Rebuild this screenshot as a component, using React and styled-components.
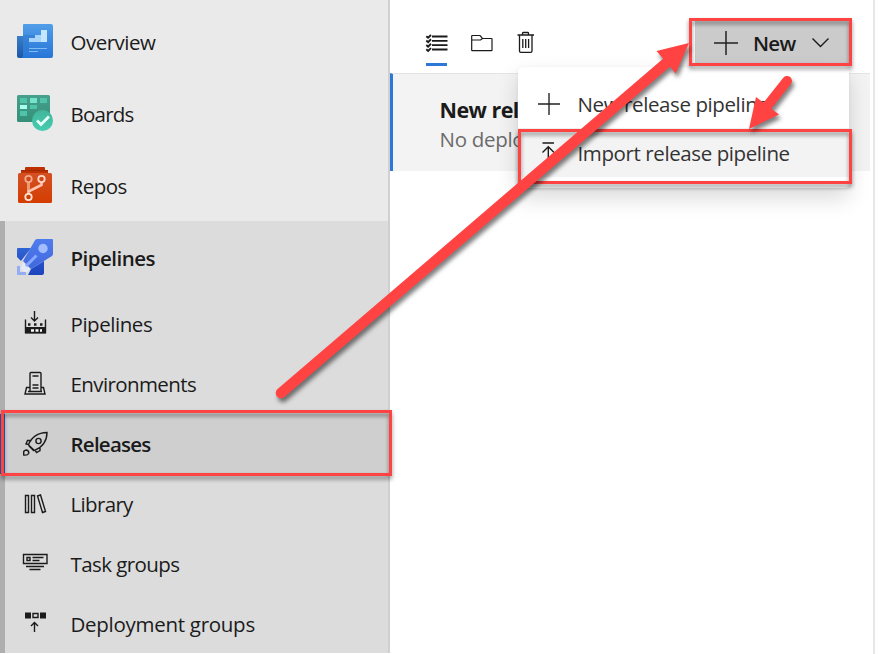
import React from "react";
import styled, { createGlobalStyle, css } from "styled-components";

const Global = createGlobalStyle`
  * { box-sizing: border-box; }
  body { margin: 0; background: #fff; font-family: "Open Sans", "Noto Sans", sans-serif; color: #1b1b1b; }
  svg { display: block; overflow: visible; }
`;

const Page = styled.div`
  position: relative;
  display: flex;
  width: 882px;
  height: 654px;
  overflow: hidden;
`;

const Sidebar = styled.nav`
  width: 390px;
  height: 653px;
  overflow: hidden;
  background: #eaeaea;
  border-right: 2px solid #d0d0d0;
  display: flex;
  flex-direction: column;
`;

const HubList = styled.div`
  flex: none;
  padding-top: 6px;
  height: 221px;
`;

const NavItem = styled.a`
  display: flex;
  align-items: center;
  height: ${(p) => (p.$hub ? 72 : 60)}px;
  padding-left: ${(p) => (p.$inset ? 11 : 16)}px;
  ${(p) =>
    p.$selected &&
    css`
      background: #cfcfcf;
      border-left: 5px solid #1f62bd;
      margin-left: -5px;
      padding-left: 11px;
    `}
`;

const IconBox = styled.span`
  width: 38px;
  height: 38px;
  flex: none;
`;

const Label = styled.span`
  margin-left: 16.5px;
  padding-top: ${(p) => p.$drop || 0}px;
  font-size: 20.5px;
  line-height: 28px;
  white-space: nowrap;
  font-weight: ${(p) => (p.$strong ? 600 : 400)};
  letter-spacing: ${(p) => p.$track || 0}px;
`;

const Section = styled.div`
  flex: 1;
  min-height: 0;
  background: #dcdcdc;
  border-left: 5px solid #afafaf;
`;

const SectionHead = styled.div`
  height: 73px;
`;

const Main = styled.main`
  width: 485px;
  border-right: 2px solid #e6e6e6;
`;

const Toolbar = styled.header`
  display: flex;
  align-items: flex-start;
  height: 73px;
  padding: 19px 24px 0 36px;
`;

const ToolTab = styled.span`
  width: 21px;
  height: 47px;
  margin-right: ${(p) => p.$gap || 0}px;
  padding-top: 11px;
  border-bottom: 3px solid ${(p) => (p.$active ? "#2b78d8" : "transparent")};
`;

const NewButton = styled.div`
  display: flex;
  align-items: center;
  width: 154px;
  height: 47px;
  margin-left: auto;
  padding-left: 19px;
  background: #cbcbcb;
  border-radius: 2px;
  font-size: 20.5px;
  font-weight: 600;
  letter-spacing: -0.7px;
`;

const ButtonText = styled.span`
  width: 58px;
  margin-left: 15px;
`;

const ReleaseRow = styled.section`
  width: 480px;
  height: 98px;
  padding: 21px 0 0 46.5px;
  background: #f3f3f3;
  border-top: 1px solid #e4e4e4;
  border-left: 3px solid #2b78d8;
  line-height: 30px;
  white-space: nowrap;
`;

const ReleaseTitle = styled.div`
  font-size: 21.5px;
  font-weight: 700;
  letter-spacing: -0.55px;
`;

const ReleaseStatus = styled.div`
  font-size: 20.5px;
  line-height: 28px;
  letter-spacing: -0.3px;
  color: #6b6b6b;
`;

const Menu = styled.div`
  position: absolute;
  left: 518px;
  top: 67px;
  width: 331px;
  height: 121px;
  padding-top: 12px;
  background: #fff;
  border-radius: 4px;
  box-shadow: 0 10px 22px rgba(0, 0, 0, 0.15), 0 1px 4px rgba(0, 0, 0, 0.06);
`;

const MenuItem = styled.div`
  display: flex;
  align-items: center;
  height: 49px;
  padding-left: 20px;
  background: ${(p) => (p.$hover ? "#f3f3f3" : "#fff")};
  color: #333;
`;

const MenuLabel = styled.span`
  margin-left: 17.5px;
  font-size: 20.5px;
  line-height: 28px;
  letter-spacing: -0.4px;
  white-space: nowrap;
`;

const Highlight = styled.div`
  position: absolute;
  left: ${(p) => p.$x}px;
  top: ${(p) => p.$y}px;
  width: ${(p) => p.$w}px;
  height: ${(p) => p.$h}px;
  border: 3px solid #ff4343;
  filter: drop-shadow(0 3px 2px rgba(0, 0, 0, 0.45));
`;

const ArrowLayer = styled.svg`
  position: absolute;
  left: 0;
  top: 0;
  filter: drop-shadow(2px 4px 2px rgba(0, 0, 0, 0.5));
`;

const OverviewIcon = () => (
  <svg width="38" height="38">
    <defs>
      <linearGradient id="ov" x2="0" y2="1"><stop stopColor="#519ee8" /><stop offset="1" stopColor="#2775d8" /></linearGradient>
      <linearGradient id="ovs" x2="0" y2="1"><stop stopColor="#397fc7" /><stop offset="1" stopColor="#1d57a7" /></linearGradient>
    </defs>
    <path d="M1 13h7v22H3q-2 0-2-2z" fill="url(#ovs)" />
    <path d="M8 1h27q2 0 2 2v30q0 2-2 2H5q2 0 2-2V2q0-1 1-1z" fill="url(#ov)" />
    <path d="M7 12h12v6h-6v9H7z" fill="#2c78cb" opacity=".5" />
    <path d="M13 15h6v-3h6V7h6v12H13z" fill="#a9d5fc" />
    <path d="M25 7h6v12h-6z" fill="#d3ecff" opacity=".7" />
    <path d="M13 25.500h18M13 28.500h9" stroke="#7fbaf5" />
  </svg>
);

const BoardsIcon = () => (
  <svg width="38" height="38">
    <defs>
      <linearGradient id="bo" x2="0" y2="1"><stop stopColor="#47a08c" /><stop offset="1" stopColor="#349078" /></linearGradient>
      <linearGradient id="boc" x2="0" y2="1"><stop stopColor="#42b59a" /><stop offset="1" stopColor="#45cdb0" /></linearGradient>
    </defs>
    <rect x="1" width="33" height="27" rx="1.500" fill="url(#bo)" />
    <path d="M4 3h7v5H4zM24 3h7v5h-7zM14 10h7v4h-7zM4 16h7v5H4z" fill="#4fc4a9" />
    <path d="M14 3h7v5h-7z" fill="#75e3cc" />
    <path d="M4 10h7v4H4z" fill="#a8fff0" />
    <circle cx="26.500" cy="25.500" r="10.500" fill="url(#boc)" />
    <path d="M21 25.500l4 4 8-8" fill="none" stroke="#e6fff8" strokeWidth="2.800" />
  </svg>
);

const ReposIcon = () => (
  <svg width="38" height="38">
    <defs>
      <linearGradient id="re" x2="0" y2="1"><stop stopColor="#d35124" /><stop offset="1" stopColor="#d43d00" /></linearGradient>
    </defs>
    <path d="M9 1q0-1 1-1h18q1 0 1 1v2h2q1 0 1 1v4H5V4q0-1 1-1h3z" fill="#bd3100" />
    <path d="M5 3.500h27" stroke="#a32800" />
    <rect x="2" y="6" width="34" height="30" rx="1.500" fill="url(#re)" />
    <path d="M12.500 15v12M25.500 15v3L12.500 24.500" fill="none" stroke="#ffc5ae" strokeWidth="2.600" />
    <path d="M12.500 15v8" stroke="#ed9473" strokeWidth="2.600" />
    <circle cx="12.500" cy="12" r="3.200" fill="#cf4718" stroke="#f4a98c" strokeWidth="1.800" />
    <circle cx="25.500" cy="12" r="3.200" fill="#cf4718" stroke="#ffd8c9" strokeWidth="1.800" />
    <circle cx="12.500" cy="30" r="3.200" fill="#cf3c00" stroke="#ffe3d6" strokeWidth="1.800" />
  </svg>
);

const PipelinesHubIcon = () => (
  <svg width="38" height="38">
    <defs>
      <linearGradient id="pi" x2="0" y2="1"><stop stopColor="#3064d3" /><stop offset="1" stopColor="#1c43bd" /></linearGradient>
      <linearGradient id="pf" x2="0" y2="1"><stop stopColor="#4f7cec" /><stop offset="1" stopColor="#4068df" /></linearGradient>
    </defs>
    <path d="M2 10h13L5 23l-4-4v-8q0-1 1-1zM15 31l13-8v12q0 2-2 2H12z" fill="url(#pi)" />
    <path d="M21 1h15q1 0 1 1v14q0 1-1 2L15 31 7 23 18 4q1-3 3-3z" fill="url(#pf)" />
    <path d="M7 24l7 7-3 4q-1-1-3-1-1-1-3-3 0-4 2-7z" fill="#e4eafa" opacity=".9" />
    <path d="M10 28L20.500 17.500" stroke="#87a9ff" strokeWidth="3" />
    <circle cx="27" cy="10.500" r="4.700" fill="#a3bcff" />
    <path d="M1 28h3v6h6v3H1z" fill="#94adf3" />
  </svg>
);

const LineIcon = ({ children, w = 38, h = 38 }) => (
  <svg width={w} height={h} fill="none" stroke="#1b1b1b" strokeWidth="1.400">{children}</svg>
);

const BuildIcon = () => (
  <LineIcon>
    <path d="M18.500 6v10M15 12.500l3.500 3.500 3.500-3.500M9.500 14.500v13h20v-13" />
    <path d="M9 22h21v6.500H9z" fill="#1b1b1b" stroke="none" />
    <path d="M12 19.500h15" strokeWidth="2.500" strokeDasharray="2.500 3.500" />
    <path d="M15 25.500h11" stroke="#fff" strokeWidth="2.500" strokeDasharray="3 1.500" />
  </LineIcon>
);
const EnvironmentIcon = () => (
  <LineIcon>
    <path d="M14 26V8.500q0-1 1-1h9q1 0 1 1V26M14 22.500h-3.500L9 29h20l-1.500-6.500H25M12 26.500h14M16.500 11h6M16.500 20h6M16.500 23h6" />
  </LineIcon>
);
const RocketIcon = () => (
  <LineIcon>
    <path d="M12.500 20C15 12.500 22 7.500 31 7.500c0 8-4.500 14.500-12.500 18zM15.500 15.500H11.500l-1.500 3.500 3 .5M24 22v3.500l-3.500 2-1.500-2.500" />
    <circle cx="22.500" cy="16" r="2.600" />
    <path d="M13 21l5 5M7.700 30v-3.500q1-1.500 3-1.500 2.500 1 2 3.500-1 2-5 1.500z" />
  </LineIcon>
);
const LibraryIcon = () => (
  <LineIcon>
    <path d="M9.500 10.500h3v17h-3zM15.500 10.500h3v17h-3zM21.500 11l3-1 5 16.500-3 1z" />
  </LineIcon>
);
const TaskIcon = () => (
  <LineIcon>
    <path d="M7.500 9.500h23.500v9H7.500zM11 12.500h3v3h-3zM16.500 12.500h11M16.500 15.500h7M10 21.500h18M13.500 24.500h11" />
  </LineIcon>
);
const DeployIcon = () => (
  <LineIcon>
    <path d="M9 7.500h6v6H9zM24 7.500h6v6h-6z" fill="#1b1b1b" stroke="none" />
    <path d="M17 8.500h5v4h-5zM18.500 27V17.500M15 21l3.500-3.500 3.500 3.500" />
  </LineIcon>
);

const ListIcon = () => (
  <LineIcon w={22} h={22}>
    <path d="M6 6.500h15.500M6 10.800h15.500M6 15.200h15.500M6 19.500h15.500" strokeWidth="1.800" />
    <path d="M.3 6.200l1.800 1.600L5 5M.3 10.500l1.800 1.600L5 9.300M.3 15l1.800 1.600L5 13.800M.3 19.300l1.800 1.600L5 18.100" strokeWidth="1.900" />
  </LineIcon>
);
const FolderIcon = () => (
  <LineIcon w={22} h={22}>
    <path d="M.7 20.300V6q0-.5.5-.5H9l2.500 3h9q.5 0 .5.500v11.300q0 .4-.5.400H1.200q-.5 0-.5-.4zM1 10h8.500l2-1.500" strokeWidth="1.200" />
  </LineIcon>
);
const TrashIcon = () => (
  <LineIcon w={22} h={22}>
    <path d="M-.5 5h16.500M4.500 5V3.200q0-.7.700-.7h4.600q.7 0 .7.700V5M1.500 5v16q0 1.300 1.300 1.300h9.900q1.300 0 1.300-1.300V5M4.800 9v9M7.700 9v9M10.600 9v9" strokeWidth="1.300" />
  </LineIcon>
);
const PlusIcon = ({ size }) => (
  <svg width={size} height={size} viewBox="0 0 24 24" fill="none" stroke="#222" strokeWidth="1.500"><path d="M0 12h24M12 0v24" /></svg>
);
const ChevronIcon = () => (
  <LineIcon w={18} h={12}><path d="M1.500 1.500l8 8 8-8" /></LineIcon>
);
const ImportIcon = () => (
  <LineIcon w={22} h={24}><path d="M4.500 2H16M10.300 22V6M4.500 11.500l5.800-5.800 5.800 5.800" /></LineIcon>
);

const hubs = [
  { name: "Overview", Icon: OverviewIcon, track: -0.5 },
  { name: "Boards", Icon: BoardsIcon, track: -0.77 },
  { name: "Repos", Icon: ReposIcon, track: -0.48 },
];

const pages = [
  { name: "Pipelines", Icon: BuildIcon, track: -0.45 },
  { name: "Environments", Icon: EnvironmentIcon, track: -0.6 },
  { name: "Releases", Icon: RocketIcon, track: -0.75, selected: true },
  { name: "Library", Icon: LibraryIcon, track: -0.66 },
  { name: "Task groups", Icon: TaskIcon, track: -0.57 },
  { name: "Deployment groups", Icon: DeployIcon, track: -0.28 },
];

export default function App() {
  return (
    <Page>
      <Global />
      <Sidebar>
        <HubList>
          {hubs.map(({ name, Icon, track }) => (
            <NavItem key={name} $hub>
              <IconBox><Icon /></IconBox>
              <Label $track={track}>{name}</Label>
            </NavItem>
          ))}
        </HubList>
        <Section>
          <SectionHead>
            <NavItem $hub $inset>
              <IconBox><PipelinesHubIcon /></IconBox>
              <Label $strong $drop={2} $track={-0.52}>Pipelines</Label>
            </NavItem>
          </SectionHead>
          {pages.map(({ name, Icon, selected, track }) => (
            <NavItem key={name} $inset $selected={selected}>
              <IconBox><Icon /></IconBox>
              <Label $strong={selected} $track={track}>{name}</Label>
            </NavItem>
          ))}
        </Section>
      </Sidebar>
      <Main>
        <Toolbar>
          <ToolTab $active $gap={24}><ListIcon /></ToolTab>
          <ToolTab $gap={26}><FolderIcon /></ToolTab>
          <ToolTab><TrashIcon /></ToolTab>
          <NewButton>
            <PlusIcon size={24} />
            <ButtonText>New</ButtonText>
            <ChevronIcon />
          </NewButton>
        </Toolbar>
        <ReleaseRow>
          <ReleaseTitle>New rel</ReleaseTitle>
          <ReleaseStatus>No deplo</ReleaseStatus>
        </ReleaseRow>
      </Main>
      <Menu>
        <MenuItem>
          <PlusIcon size={22} />
          <MenuLabel>New release pipeline</MenuLabel>
        </MenuItem>
        <MenuItem $hover>
          <ImportIcon />
          <MenuLabel>Import release pipeline</MenuLabel>
        </MenuItem>
      </Menu>
      <Highlight $x={1} $y={410} $w={391} $h={66} />
      <Highlight $x={689} $y={18} $w={163} $h={48} />
      <Highlight $x={518} $y={129} $w={334} $h={55} />
      <ArrowLayer width="882" height="654" fill="#ff4343" stroke="#ff4343">
        <path d="M281 393L672 58" strokeWidth="10.500" strokeLinecap="round" />
        <path d="M689 43L675.700 73.500 669.500 66 662.500 58 656.500 51z" stroke="none" />
        <path d="M787 81L764 110" strokeWidth="10" strokeLinecap="round" />
        <path d="M749 129L756 97 779 114.500z" stroke="none" />
      </ArrowLayer>
    </Page>
  );
}
